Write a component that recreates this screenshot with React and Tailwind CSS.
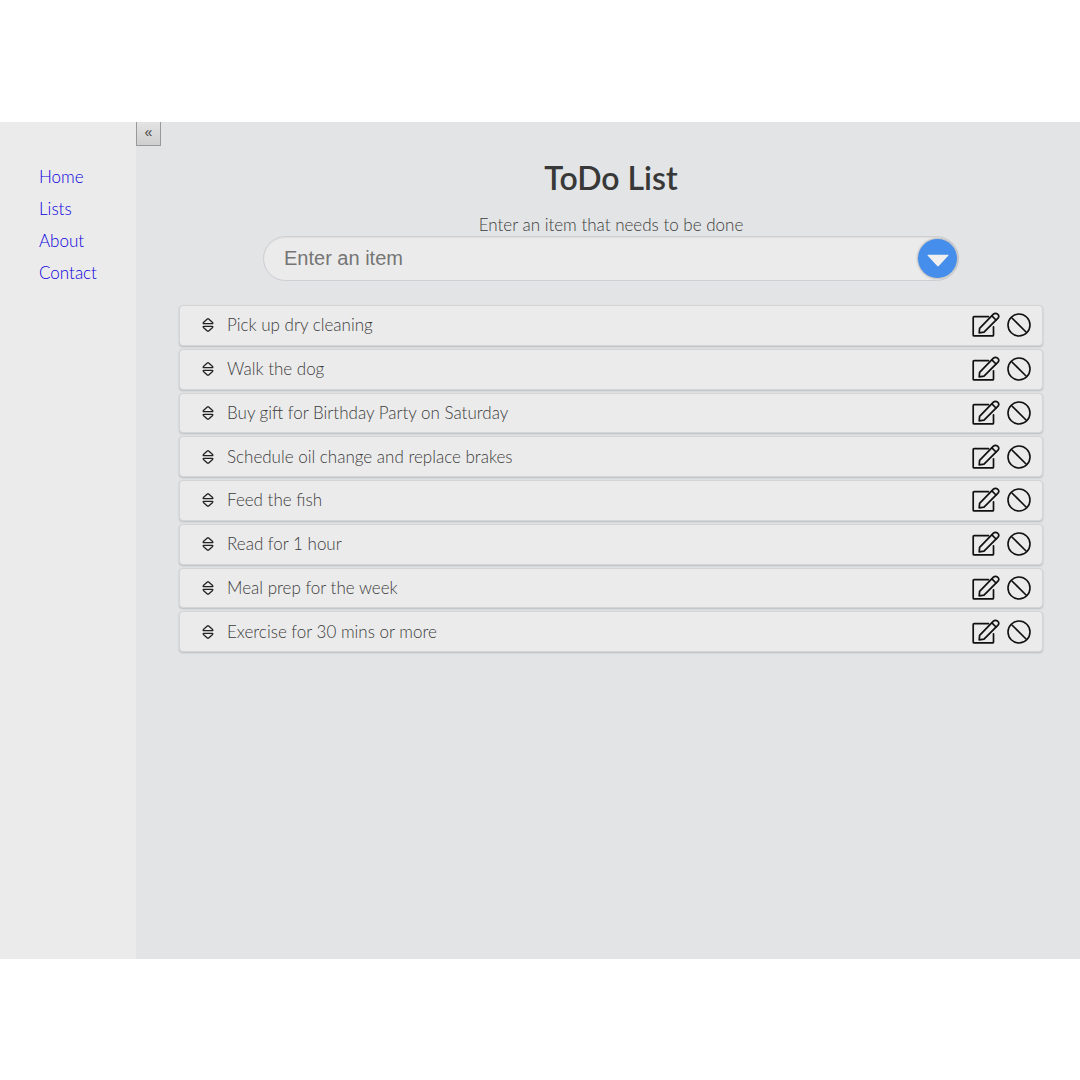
import React from 'react';

const links = ['Home', 'Lists', 'About', 'Contact'];

const items = [
  'Pick up dry cleaning',
  'Walk the dog',
  'Buy gift for Birthday Party on Saturday',
  'Schedule oil change and replace brakes',
  'Feed the fish',
  'Read for 1 hour',
  'Meal prep for the week',
  'Exercise for 30 mins or more',
];

function SortIcon() {
  return (
    <svg viewBox="0 0 12 16" className="h-4 w-3" fill="none" stroke="currentColor" strokeWidth="1.3" strokeLinejoin="round" strokeLinecap="round" aria-hidden="true">
      <path d="M5.3 2.1Q6 1.4 6.7 2.1L10.6 5.6Q11.2 6.7 10.2 6.7H1.8Q.8 6.7 1.4 5.6Z" />
      <path d="M5.3 13.9Q6 14.6 6.7 13.9L10.6 10.4Q11.2 9.3 10.2 9.3H1.8Q.8 9.3 1.4 10.4Z" />
    </svg>
  );
}

function EditIcon() {
  return (
    <svg viewBox="0 0 28 26" className="h-[26px] w-7" fill="none" stroke="currentColor" strokeWidth="1.7" strokeLinecap="round" strokeLinejoin="round" aria-hidden="true">
      <path d="M16.5 4.7H2.2Q1.2 4.7 1.2 5.7V22.9Q1.2 23.9 2.2 23.9H20.5Q21.5 23.9 21.5 22.9V14.8" />
      <path d="M7.2 20.8 7.6 16.4 21.4 2.2Q23.4 .4 25.6 2.2T26 6.2L12 20.2Z" />
      <path d="M19.9 3.9 24 8" />
    </svg>
  );
}

function BanIcon() {
  return (
    <svg viewBox="0 0 24 24" className="size-6" fill="none" stroke="currentColor" strokeWidth="1.6" aria-hidden="true">
      <circle cx="12" cy="12" r="11" />
      <path d="M4.2 4.2 19.8 19.8" />
    </svg>
  );
}

export default function App() {
  return (
    <div className="min-h-screen bg-white py-[122px] font-['Lato',sans-serif] font-light">
      <div className="flex min-h-[837px] bg-[#e2e4e5]">
        <nav className="w-[136px] shrink-0 bg-[#ebebeb] pt-[39px] pl-[39px]">
          <ul>
            {links.map((link) => (
              <li key={link}>
                <a href="#" className="block text-[17px] leading-8 text-[#0a00dd]">{link}</a>
              </li>
            ))}
          </ul>
        </nav>
        <div className="relative min-w-0 flex-1">
          <button type="button" aria-label="Collapse menu" className="absolute top-0 left-0 flex h-6 w-[25px] items-center justify-center border border-t-0 border-[#999] bg-linear-to-b from-[#e3e3e3] to-[#cfcfcf] pb-1 font-['Liberation_Sans',sans-serif] text-sm leading-4 font-normal text-[#444]">
            «
          </button>
          <main className="pt-9 pr-[37px] pl-[43px] text-[#3c3c3c]">
            <h1 className="text-center text-[32px] leading-10 font-semibold text-[#383838]">ToDo List</h1>
            <form className="mx-auto mt-[15px] max-w-[696px]" onSubmit={(e) => e.preventDefault()}>
              <label htmlFor="item" className="block text-center text-[17px] leading-[23px]">Enter an item that needs to be done</label>
              <div className="flex h-[45px] items-center rounded-full border border-[#cdcfd2] bg-[#ebebeb] pr-px inset-shadow-xs">
                <input id="item" type="text" placeholder="Enter an item" className="h-full min-w-0 flex-1 bg-transparent pl-5 font-['Liberation_Sans',sans-serif] text-xl font-normal text-[#555] outline-none placeholder:text-[#757575]" />
                <button type="submit" aria-label="Add item" className="flex size-[39px] shrink-0 items-center justify-center rounded-full bg-[#468eeb] text-[#f0f0f0] shadow-[0_0_2px_1px_rgba(0,0,0,0.2)]">
                  <svg viewBox="0 0 22 13" className="mt-1 h-[13px] w-[22px]" fill="currentColor" aria-hidden="true">
                    <path d="M1.2.8H20.8Q22 .8 21.2 1.7L12 11.8Q11 12.8 10 11.8L.8 1.7Q0 .8 1.2.8Z" />
                  </svg>
                </button>
              </div>
            </form>
            <ul className="mt-6 grid min-h-[347px] auto-rows-fr gap-[3px]">
              {items.map((item) => (
                <li key={item} className="flex items-center rounded-[4px] border border-[#d4d5d6] bg-[#ebebeb] pr-[11px] pl-[22px] shadow-[0_1px_2px_rgba(0,0,0,0.18)]">
                  <button type="button" aria-label={`Reorder ${item}`} className="mr-[13px] text-[#222]"><SortIcon /></button>
                  <span className="min-w-0 flex-1 text-[17px] leading-6">{item}</span>
                  <button type="button" aria-label={`Edit ${item}`} className="mr-[7px] text-[#111]"><EditIcon /></button>
                  <button type="button" aria-label={`Remove ${item}`} className="text-[#111]"><BanIcon /></button>
                </li>
              ))}
            </ul>
          </main>
        </div>
      </div>
    </div>
  );
}
